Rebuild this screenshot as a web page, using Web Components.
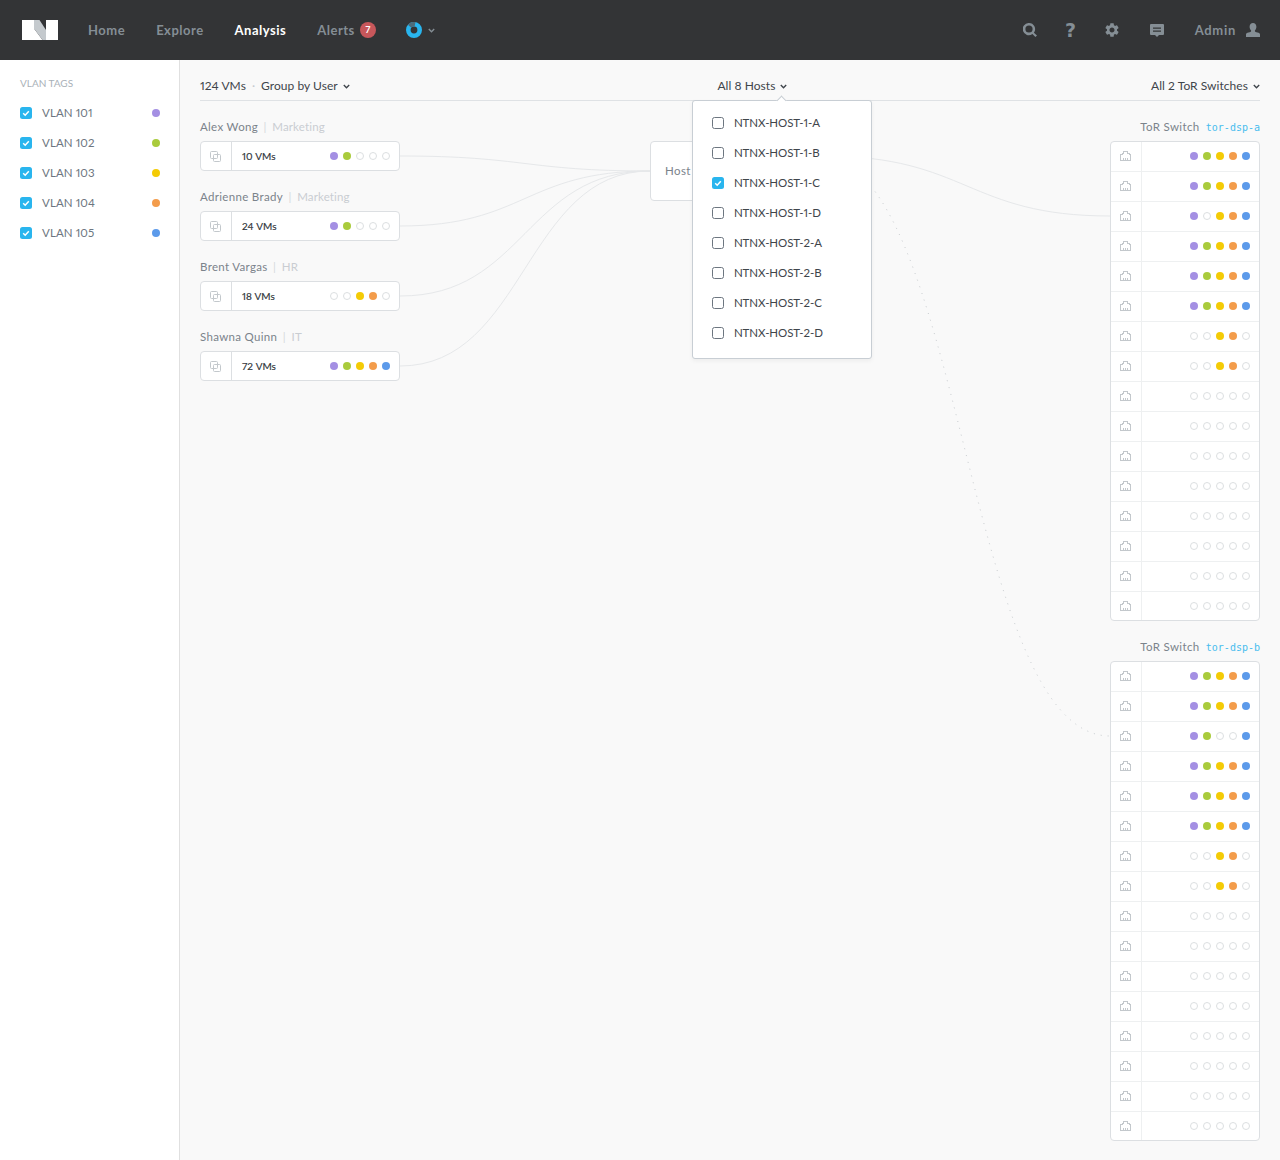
<!DOCTYPE html>
<html>
<head>
<meta charset="utf-8">
<title>Analysis</title>
<style>
  html, body { margin: 0; padding: 0; }
  body { font-family: Lato, "Liberation Sans", sans-serif; font-variant-numeric: proportional-nums; background: #f9f9f9; }
</style>
</head>
<body>
<app-shell>
  <app-header slot="top"></app-header>
  <vlan-sidebar slot="side">
    <vlan-row color="#a48fe3">VLAN 101</vlan-row>
    <vlan-row color="#a9cb3c">VLAN 102</vlan-row>
    <vlan-row color="#f4cb05">VLAN 103</vlan-row>
    <vlan-row color="#f39c4b">VLAN 104</vlan-row>
    <vlan-row color="#5c9aea">VLAN 105</vlan-row>
  </vlan-sidebar>
  <tool-bar>
    <span slot="left">124 VMs</span>
    <span slot="group">Group by User</span>
    <host-picker slot="hosts">
      <host-option>NTNX-HOST-1-A</host-option>
      <host-option>NTNX-HOST-1-B</host-option>
      <host-option checked>NTNX-HOST-1-C</host-option>
      <host-option>NTNX-HOST-1-D</host-option>
      <host-option>NTNX-HOST-2-A</host-option>
      <host-option>NTNX-HOST-2-B</host-option>
      <host-option>NTNX-HOST-2-C</host-option>
      <host-option>NTNX-HOST-2-D</host-option>
    </host-picker>
    <span slot="switches">All 2 ToR Switches</span>
  </tool-bar>
  <flow-diagram>
    <user-group slot="users" name="Alex Wong" dept="Marketing" vms="10 VMs" tags="11000"></user-group>
    <user-group slot="users" name="Adrienne Brady" dept="Marketing" vms="24 VMs" tags="11000"></user-group>
    <user-group slot="users" name="Brent Vargas" dept="HR" vms="18 VMs" tags="00110"></user-group>
    <user-group slot="users" name="Shawna Quinn" dept="IT" vms="72 VMs" tags="11111"></user-group>
    <host-node slot="host">Host</host-node>
    <tor-switch slot="switches" name="tor-dsp-a" ports="11111,11111,10111,11111,11111,11111,00110,00110,00000,00000,00000,00000,00000,00000,00000,00000"></tor-switch>
    <tor-switch slot="switches" name="tor-dsp-b" ports="11111,11111,11001,11111,11111,11111,00110,00110,00000,00000,00000,00000,00000,00000,00000,00000"></tor-switch>
  </flow-diagram>
</app-shell>

<script>
  const TAG_COLORS = ['#a48fe3', '#a9cb3c', '#f4cb05', '#f39c4b', '#5c9aea'];
  const CHEVRON = '<svg width="7" height="5" viewBox="0 0 7 5"><path d="M.8 1l2.7 2.7L6.2 1" fill="none" stroke="currentColor" stroke-width="1.4"/></svg>';

  // small helper so every element gets an open root with its own style
  class Base extends HTMLElement {
    render(html) {
      if (!this.shadowRoot) this.attachShadow({ mode: 'open' });
      this.shadowRoot.innerHTML = html;
    }
  }

  class AppShell extends Base {
    connectedCallback() {
      this.render(`<style>
        :host { display: grid; grid-template-columns: 180px 1fr; grid-template-rows: 60px 1fr; min-height: 1160px; }
        .top { grid-column: 1 / 3; }
        main { padding: 0 20px; background: #f9f9f9; min-width: 0; }
      </style>
      <div class="top"><slot name="top"></slot></div>
      <slot name="side"></slot>
      <main><slot></slot></main>`);
    }
  }

  class AppHeader extends Base {
    connectedCallback() {
      this.render(`<style>
        :host { display: flex; align-items: center; height: 60px; background: #333436; padding: 0 20px 0 22px; box-sizing: border-box;
          color: #858e95; font: 700 13px Lato, "Liberation Sans", sans-serif; letter-spacing: .5px; }
        .logo { display: block; margin-right: 30px; }
        nav { display: flex; align-items: center; gap: 31px; }
        .on { color: #fff; }
        .alerts { display: flex; align-items: center; gap: 5px; }
        .badge { width: 16px; height: 16px; border-radius: 50%; background: #c7575b; color: #fff; font-size: 9px; letter-spacing: 0; line-height: 16px; text-align: center; }
        .donut { display: flex; align-items: center; gap: 6px; margin-left: -1px; }
        .right { margin-left: auto; display: flex; align-items: center; }
        .right svg { display: block; fill: #858e95; }
        .q { width: 14px; text-align: center; font: 700 19px "DejaVu Sans", sans-serif; line-height: 20px; margin: 0 27px 0 27px; }
        .chat { margin: 0 31px 0 31px; }
        .admin { letter-spacing: .7px; }
        .user { margin-left: 10px; }
      </style>
      <svg class="logo" width="36" height="20" viewBox="0 0 36 20">
        <path d="M0 0h12v8.500L20.500 20H0z" fill="#fff"/>
        <path d="M24 0h12v20H24z" fill="#fff"/>
        <path d="M12 0h5.500L24 10v10h-3.500L12 8.500z" fill="#c4c9cd"/>
      </svg>
      <nav>
        <span>Home</span><span>Explore</span><span class="on">Analysis</span>
        <span class="alerts">Alerts <span class="badge">7</span></span>
        <span class="donut">
          <svg width="16" height="16" viewBox="0 0 16 16" fill="none" stroke-width="4.6">
            <circle cx="8" cy="8" r="5.700" stroke="#29b5ee"/>
            <path d="M3.600 4.300A5.700 5.700 0 0 1 9 2.400" stroke="#4d6b7a"/>
          </svg>
          ${CHEVRON}
        </span>
      </nav>
      <div class="right">
        <svg width="14" height="14" viewBox="0 0 14 14"><path d="M6 0a6.100 6.100 0 0 1 4.900 9.700l3.100 2.800-1.600 1.500-3-3A6.100 6.100 0 1 1 6 0zm0 2.400a3.600 3.600 0 1 0 0 7.200 3.600 3.600 0 0 0 0-7.200z"/></svg>
        <span class="q">?</span>
        <svg width="14" height="14" viewBox="2.400 2 19.200 20"><path d="M19.140 12.940c.04-.3.06-.61.06-.94 0-.32-.02-.64-.07-.94l2.030-1.580c.18-.14.23-.41.12-.61l-1.920-3.320c-.12-.22-.37-.29-.59-.22l-2.390.96c-.5-.38-1.030-.7-1.620-.94l-.36-2.540c-.04-.24-.24-.41-.48-.41h-3.840c-.24 0-.43.17-.47.41l-.36 2.540c-.59.24-1.130.57-1.620.94l-2.390-.96c-.22-.08-.47 0-.59.22L2.740 8.870c-.12.21-.08.47.12.61l2.030 1.580c-.05.3-.09.63-.09.94s.02.64.07.94l-2.030 1.580c-.18.14-.23.41-.12.61l1.920 3.320c.12.22.37.29.59.22l2.390-.96c.5.38 1.030.7 1.620.94l.36 2.540c.05.24.24.41.48.41h3.840c.24 0 .44-.17.47-.41l.36-2.540c.59-.24 1.130-.56 1.620-.94l2.390.96c.22.08.47 0 .59-.22l1.920-3.320c.12-.22.07-.47-.12-.61l-2.010-1.580zM12 15.600c-1.980 0-3.600-1.620-3.600-3.600s1.620-3.600 3.600-3.600 3.600 1.620 3.600 3.600-1.620 3.600-3.600 3.600z"/></svg>
        <svg class="chat" width="14" height="13" viewBox="0 0 14 13"><path fill-rule="evenodd" d="M1 0h12a1 1 0 0 1 1 1v9a1 1 0 0 1-1 1H9l-2 2-2-2H1a1 1 0 0 1-1-1V1a1 1 0 0 1 1-1zm2 3.500v1.200h8V3.500zm0 3v1.200h8V6.500z"/></svg>
        <span class="admin">Admin</span>
        <svg class="user" width="14" height="14" viewBox="0 0 14 14"><path d="M7 0c2 0 3.400 1.600 3.400 3.800 0 1.500-.6 2.900-1.500 3.700v.8c0 .5 1 .9 2.600 1.300 1.600.4 2.500 1 2.500 2V14H0v-2.400c0-1 .9-1.600 2.500-2C4.100 9.200 5.100 8.800 5.100 8.300v-.8C4.200 6.700 3.600 5.300 3.600 3.800 3.600 1.600 5 0 7 0z"/></svg>
      </div>`);
    }
  }

  class CheckBox extends Base {
    connectedCallback() {
      const on = this.hasAttribute('checked');
      this.render(`<style>
        :host { display: block; width: 12px; height: 12px; flex: none; }
        div { box-sizing: border-box; width: 12px; height: 12px; border-radius: 2.5px; }
        .on { background: #29b5ee; }
        .off { background: #fff; border: 1px solid #6d7680; }
        svg { display: block; }
      </style>
      ${on ? '<div class="on"><svg width="12" height="12" viewBox="0 0 12 12"><path d="M3.200 6.200l2 2 3.600-4" fill="none" stroke="#fff" stroke-width="1.5"/></svg></div>' : '<div class="off"></div>'}`);
    }
  }

  class VlanSidebar extends Base {
    connectedCallback() {
      this.render(`<style>
        :host { display: block; background: #fff; border-right: 1px solid #e0e0e0; padding: 15px 19px 0 20px; }
        h4 { margin: 0 0 7px; font: 400 10px/16px Lato, "Liberation Sans", sans-serif; letter-spacing: 0; color: #a9b1b8; text-transform: uppercase; }
      </style>
      <h4>VLAN Tags</h4><slot></slot>`);
    }
  }

  class VlanRow extends Base {
    connectedCallback() {
      this.render(`<style>
        :host { display: flex; align-items: center; height: 30px; gap: 10px; font-size: 11.500px; letter-spacing: .1px; color: #6d7680; }
        .name { padding-bottom: 1px; }
        .dot { margin-left: auto; width: 8px; height: 8px; border-radius: 50%; background: ${this.getAttribute('color')}; }
      </style>
      <check-box checked></check-box><span class="name"><slot></slot></span><span class="dot"></span>`);
    }
  }

  class ToolBar extends Base {
    connectedCallback() {
      this.render(`<style>
        :host { display: flex; justify-content: space-between; align-items: center; padding: 16px 0 4px; border-bottom: 1px solid #dfe2e5; height: 20px; line-height: 20px;
          font-size: 12px; letter-spacing: .05px; color: #3f454b; position: relative; z-index: 5; }
        div { display: flex; align-items: center; gap: 5px; }
        .first { padding-right: 4px; }
        .sep { color: #c5cad0; margin: 0 1px; }
      </style>
      <div class="first"><slot name="left"></slot><span class="sep">·</span><slot name="group"></slot>${CHEVRON}</div>
      <slot name="hosts"></slot>
      <div><slot name="switches"></slot>${CHEVRON}</div>`);
    }
  }

  class HostPicker extends Base {
    connectedCallback() {
      this.render(`<style>
        :host { display: block; position: relative; }
        .label { display: flex; align-items: center; gap: 5px; }
        .menu { position: absolute; top: 24px; left: -25px; width: 178px; padding-top: 7px; height: 250px;
          background: #fff; border: 1px solid #c8ced4; border-radius: 3px; box-shadow: 0 2px 4px rgba(0,0,0,.05); }
        .caret { position: absolute; top: -4px; left: 85px; width: 6px; height: 6px; background: #fff; border-left: 1px solid #c8ced4; border-top: 1px solid #c8ced4; transform: rotate(45deg); }
      </style>
      <div class="label">All 8 Hosts ${CHEVRON}</div>
      <div class="menu"><span class="caret"></span><slot></slot></div>`);
    }
  }

  class HostOption extends Base {
    connectedCallback() {
      this.render(`<style>
        :host { display: flex; align-items: center; gap: 9.500px; height: 30px; padding-left: 19px; position: relative; font-size: 11.500px; letter-spacing: -.08px; }
      </style>
      <check-box ${this.hasAttribute('checked') ? 'checked' : ''}></check-box><span><slot></slot></span>`);
    }
  }

  class TagDots extends Base {
    connectedCallback() {
      const dots = (this.getAttribute('tags') || '').split('').map((t, i) =>
        t == '1' ? `<i style="background:${TAG_COLORS[i]}"></i>` : '<i class="off"></i>').join('');
      this.render(`<style>
        :host { display: flex; gap: 5px; margin-left: auto; }
        i { display: block; box-sizing: border-box; width: 8px; height: 8px; border-radius: 50%; }
        .off { background: #fff; border: 1px solid #dcdfe1; }
      </style>${dots}`);
    }
  }

  class UserGroup extends Base {
    connectedCallback() {
      const a = (n) => this.getAttribute(n);
      this.render(`<style>
        :host { display: block; width: 200px; }
        .label { height: 20px; line-height: 20px; margin-bottom: 4px; font-size: 11.500px; letter-spacing: .32px; color: #7b838b; white-space: nowrap; }
        .label b { font-weight: 400; color: #c9cdd2; letter-spacing: .15px; }
        .label u { text-decoration: none; color: #d5d9dc; margin: 0 5.500px; }
        .card { display: flex; align-items: center; box-sizing: border-box; height: 30px; background: #fff; border: 1px solid #dcdfe2; border-radius: 4px; padding-right: 9px; }
        .icon { display: flex; align-items: center; justify-content: center; width: 30px; height: 100%; border-right: 1px solid #dcdfe2; box-sizing: content-box; }
        .icon svg { margin-right: 1px; }
        .vms { margin-left: 10px; font-size: 10px; letter-spacing: 0; word-spacing: .5px; color: #2f3439; -webkit-text-stroke: .15px #2f3439; }
      </style>
      <div class="label">${a('name')}<u>|</u><b>${a('dept')}</b></div>
      <div class="card">
        <div class="icon"><svg width="11" height="11" viewBox="0 0 11 11" fill="none" stroke="#c3c8cc"><rect x=".5" y=".5" width="7" height="7" rx="1"/><rect x="3.500" y="3.500" width="7" height="7" rx="1"/></svg></div>
        <span class="vms">${a('vms')}</span>
        <tag-dots tags="${a('tags')}"></tag-dots>
      </div>`);
    }
  }

  class HostNode extends Base {
    connectedCallback() {
      this.render(`<style>
        :host { display: flex; align-items: center; box-sizing: border-box; width: 210px; height: 60px; margin-top: 24px; padding: 0 0 1px 14px;
          background: #fff; border: 1px solid #dcdfe2; border-radius: 4px; font-size: 11.500px; letter-spacing: .4px; color: #7b838b; }
      </style><slot></slot>`);
    }
  }

  class TorSwitch extends Base {
    connectedCallback() {
      const rows = this.getAttribute('ports').split(',').map(p => `<div class="row">
        <div class="icon"><svg width="11" height="10" viewBox="0 0 11 10" fill="none" stroke="#c3c8cc" shape-rendering="crispEdges"><path d="M.5 9.500V3.500H2V2h1.500V.5h4V2H9v1.500h1.500v6z"/><path d="M3.500 7v2M5.500 7v2M7.500 7v2"/></svg></div>
        <tag-dots tags="${p}"></tag-dots></div>`).join('');
      this.render(`<style>
        :host { display: block; width: 150px; }
        .label { height: 20px; line-height: 20px; margin-bottom: 4px; text-align: right; font-size: 11.500px; letter-spacing: .36px; color: #7b838b; white-space: nowrap; }
        .label code { font: 10px "DejaVu Sans Mono", monospace; letter-spacing: 0; color: #48bdee; margin-left: 3px; }
        .card { background: #fff; border: 1px solid #dcdfe2; border-radius: 4px; }
        .row { display: flex; align-items: center; height: 30px; box-sizing: border-box; padding-right: 9px; border-bottom: 1px solid #eef0f1; }
        .row:last-child { border-bottom: 0; height: 28px; }
        .row tag-dots { margin-bottom: 1px; }
        .row:last-child tag-dots { margin-bottom: 0; }
        .icon { display: flex; align-items: center; justify-content: center; width: 30px; height: 100%; border-right: 1px solid #eef0f1; }
        .icon svg { margin: 0 1px 1px 0; }
      </style>
      <div class="label">ToR Switch <code>${this.getAttribute('name')}</code></div>
      <div class="card">${rows}</div>`);
    }
  }

  class FlowDiagram extends Base {
    connectedCallback() {
      const solid = [
        'M400 156C525 156 525 171 650 171',
        'M400 226C525 226 525 171 650 171',
        'M400 296C525 296 525 171 650 171',
        'M400 366C525 366 525 171 650 171',
        'M824 156C967 156 967 216 1110 216'
      ].map(d => `<path d="${d}" stroke="#e6e8ea"/>`).join('');
      this.render(`<style>
        :host { display: flex; justify-content: space-between; align-items: flex-start; padding-top: 16px; position: relative; }
        svg { position: absolute; left: 0; top: 0; overflow: visible; }
        .col { display: flex; flex-direction: column; gap: 16px; position: relative; }
        ::slotted(host-node) { position: relative; }
      </style>
      <svg width="1060" height="1059" viewBox="200 101 1060 1059" fill="none">
        ${solid}
        <path d="M818 156C964 156 964 736 1110 736" stroke="#c9cdd0" stroke-dasharray="1 6"/>
      </svg>
      <div class="col"><slot name="users"></slot></div>
      <slot name="host"></slot>
      <div class="col"><slot name="switches"></slot></div>`);
    }
  }

  customElements.define('check-box', CheckBox);
  customElements.define('tag-dots', TagDots);
  customElements.define('app-shell', AppShell);
  customElements.define('app-header', AppHeader);
  customElements.define('vlan-sidebar', VlanSidebar);
  customElements.define('vlan-row', VlanRow);
  customElements.define('tool-bar', ToolBar);
  customElements.define('host-picker', HostPicker);
  customElements.define('host-option', HostOption);
  customElements.define('user-group', UserGroup);
  customElements.define('host-node', HostNode);
  customElements.define('tor-switch', TorSwitch);
  customElements.define('flow-diagram', FlowDiagram);
</script>
</body>
</html>
